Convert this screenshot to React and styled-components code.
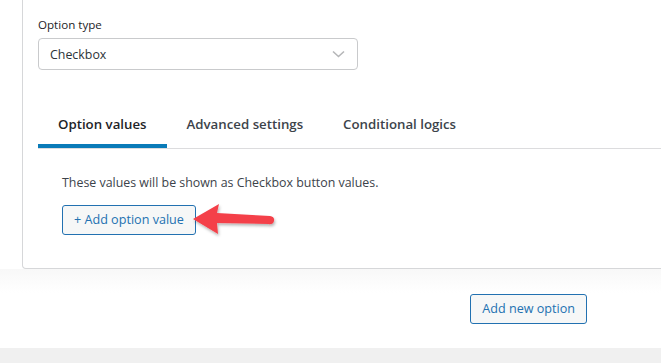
import React from "react";
import styled, { createGlobalStyle } from "styled-components";

const Global = createGlobalStyle`
  html, body { margin: 0; padding: 0; background: #fff; overflow: hidden; }
  body { font-family: "Segoe UI", "Open Sans", "Noto Sans", sans-serif; }
  * { box-sizing: border-box; }
`;

const Page = styled.div`
  width: 661px;
  height: 363px;
  display: flex;
  flex-direction: column;
  overflow: hidden;
`;

const CardWrap = styled.div`
  padding-left: 22px;
  margin-right: -20px;
`;

const Card = styled.div`
  border: 1px solid #d6d7d9;
  border-top: none;
  border-radius: 0 0 4px 4px;
  background: #fff;
  padding: 17px 0 33px 15px;
`;

const Label = styled.div`
  font-size: 11.6px;
  line-height: 15px;
  color: #1d2327;
`;

const Select = styled.div`
  margin-top: 6px;
  width: 320px;
  height: 32px;
  border: 1px solid #c9cacc;
  border-radius: 4px;
  display: flex;
  align-items: center;
  justify-content: space-between;
  padding: 0 12px 0 11px;
  font-size: 12.4px;
  color: #2c3338;
`;

const TabRow = styled.div`
  margin-top: 28px;
  display: flex;
  border-bottom: 1px solid #dcdcde;
`;

const Tab = styled.div`
  padding: 16px 20px 10px;
  font-size: 13.25px;
  line-height: 20px;
  font-weight: 600;
  color: ${(p) => (p.$active ? "#1d2327" : "#3c434a")};
  border-bottom: 4px solid ${(p) => (p.$active ? "#0a7bb8" : "transparent")};
`;

const Panel = styled.div`
  padding: 24px 0 0 24px;
`;

const Desc = styled.div`
  font-size: 12.4px;
  line-height: 20px;
  color: #3c434a;
`;

const OutlineButton = styled.button`
  font-family: inherit;
  font-size: 12.6px;
  height: 30px;
  padding: 0 ${(p) => p.$px || 11}px;
  border: 1px solid #2271b1;
  border-radius: 3px;
  background: #f6f7f7;
  color: #2271b1;
  cursor: pointer;
  line-height: 1;
`;

const AddRow = styled.div`
  margin-top: 12px;
  display: flex;
  align-items: center;
  position: relative;
`;

const Arrow = styled.svg`
  position: absolute;
  left: 127px;
  top: -6px;
  overflow: visible;
`;

const Footer = styled.div`
  flex: 0 0 79px;
  background: linear-gradient(#f8f8f8, #ffffff 24px);
  display: flex;
  justify-content: flex-end;
  align-items: flex-start;
  padding: 25px 74px 0 0;
`;

const Band = styled.div`
  flex: 1;
  background: #f0f0f0;
`;

export default function App() {
  return (
    <Page>
      <Global />
      <CardWrap>
        <Card>
          <Label>Option type</Label>
          <Select>
            <span>Checkbox</span>
            <svg width="13" height="8" viewBox="0 0 13 8">
              <path d="M1 1.5 L6.5 6.5 L12 1.5" fill="none" stroke="#b5b6b8" strokeWidth="1.6" />
            </svg>
          </Select>
          <TabRow>
            <Tab $active>Option values</Tab>
            <Tab>Advanced settings</Tab>
            <Tab>Conditional logics</Tab>
          </TabRow>
          <Panel>
            <Desc>These values will be shown as Checkbox button values.</Desc>
            <AddRow>
              <OutlineButton $px={11}>+ Add option value</OutlineButton>
              <Arrow width="90" height="40" viewBox="0 0 90 40">
                <defs>
                  <filter id="sh" x="-20%" y="-30%" width="150%" height="180%">
                    <feDropShadow dx="1" dy="2" stdDeviation="1.5" floodColor="#000" floodOpacity="0.3" />
                  </filter>
                </defs>
                <g filter="url(#sh)" fill="#f4414a">
                  <path d="M4 20 L30 5 L28 14 L81 17 Q86 18 85 22 Q84 26 79 25 L28 24 L29 35 Z" />
                </g>
              </Arrow>
            </AddRow>
          </Panel>
        </Card>
      </CardWrap>
      <Footer>
        <OutlineButton $px={11}>Add new option</OutlineButton>
      </Footer>
      <Band />
    </Page>
  );
}
